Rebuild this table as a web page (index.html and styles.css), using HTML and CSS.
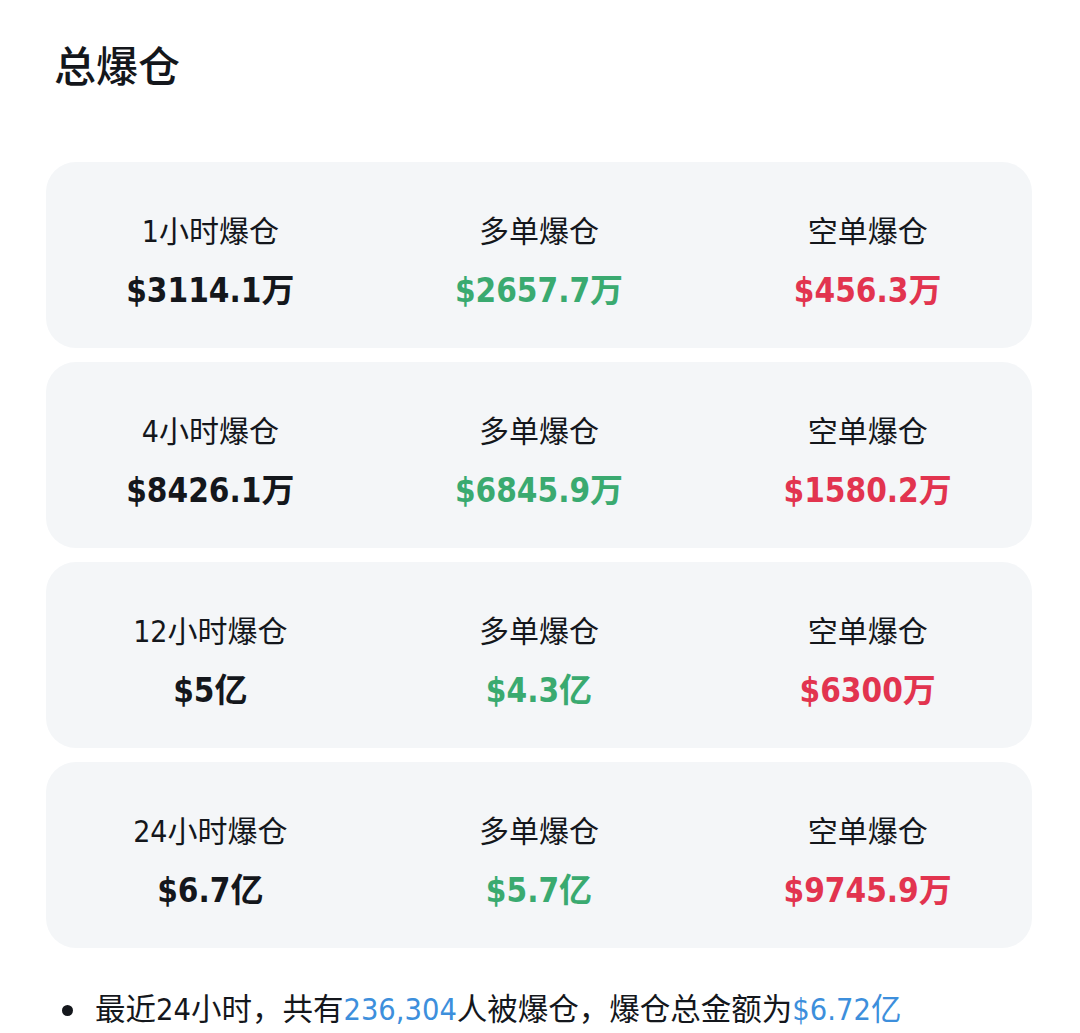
FILE: index.html
```html
<!DOCTYPE html>
<html lang="zh-CN">
<head>
<meta charset="utf-8">
<link rel="stylesheet" href="styles.css">
</head>
<body>
<div class="page">
  <h1 class="title">总爆仓</h1>
  <div class="cards">
    <div class="card">
      <div class="cell"><div class="label">1小时爆仓</div><div class="value">$3114.1万</div></div>
      <div class="cell"><div class="label">多单爆仓</div><div class="value green">$2657.7万</div></div>
      <div class="cell"><div class="label">空单爆仓</div><div class="value red">$456.3万</div></div>
    </div>
    <div class="card">
      <div class="cell"><div class="label">4小时爆仓</div><div class="value">$8426.1万</div></div>
      <div class="cell"><div class="label">多单爆仓</div><div class="value green">$6845.9万</div></div>
      <div class="cell"><div class="label">空单爆仓</div><div class="value red">$1580.2万</div></div>
    </div>
    <div class="card">
      <div class="cell"><div class="label">12小时爆仓</div><div class="value">$5亿</div></div>
      <div class="cell"><div class="label">多单爆仓</div><div class="value green">$4.3亿</div></div>
      <div class="cell"><div class="label">空单爆仓</div><div class="value red">$6300万</div></div>
    </div>
    <div class="card">
      <div class="cell"><div class="label">24小时爆仓</div><div class="value">$6.7亿</div></div>
      <div class="cell"><div class="label">多单爆仓</div><div class="value green">$5.7亿</div></div>
      <div class="cell"><div class="label">空单爆仓</div><div class="value red">$9745.9万</div></div>
    </div>
  </div>
  <ul class="notes">
    <li class="note"><span class="dot"></span><span>最近24小时，共有<span class="blue">236,304</span>人被爆仓，爆仓总金额为<span class="blue">$6.72亿</span></span></li>
  </ul>
</div>
</body>
</html>
```
FILE: styles.css
```css
* { box-sizing: border-box; }
html, body { margin: 0; padding: 0; background: #fff; }
body {
  font-family: "DejaVu Sans Condensed", "Noto Sans CJK SC", sans-serif;
  color: #14171c;
}
.page { padding: 0 48px 0 46px; }
.title {
  margin: 0;
  padding: 36px 0 0 8px;
  font-family: "Noto Sans CJK SC", sans-serif;
  font-size: 42px;
  font-weight: 500;
  line-height: 56px;
}
.cards {
  margin-top: 70px;
  display: flex;
  flex-direction: column;
  gap: 14px;
}
.card {
  height: 186px;
  background: #f4f6f8;
  border-radius: 30px;
  display: grid;
  grid-template-columns: 1fr 1fr 1fr;
  align-content: start;
  padding-top: 50px;
}
.cell {
  display: flex;
  flex-direction: column;
  align-items: center;
  gap: 17px;
}
.label {
  font-size: 30px;
  line-height: 40px;
}
.value {
  font-weight: bold;
  font-size: 33px;
  line-height: 44px;
}
.green { color: #3aaa70; }
.red { color: #e2344f; }
.blue { color: #3d8fdc; }
.notes {
  list-style: none;
  margin: 42px 0 0 0;
  padding: 0 0 0 16px;
  font-size: 30.5px;
  line-height: 40px;
}
.note {
  display: flex;
  align-items: center;
  gap: 22px;
}
.dot {
  width: 11px;
  height: 11px;
  border-radius: 50%;
  background: #14171c;
  flex: none;
}
```
